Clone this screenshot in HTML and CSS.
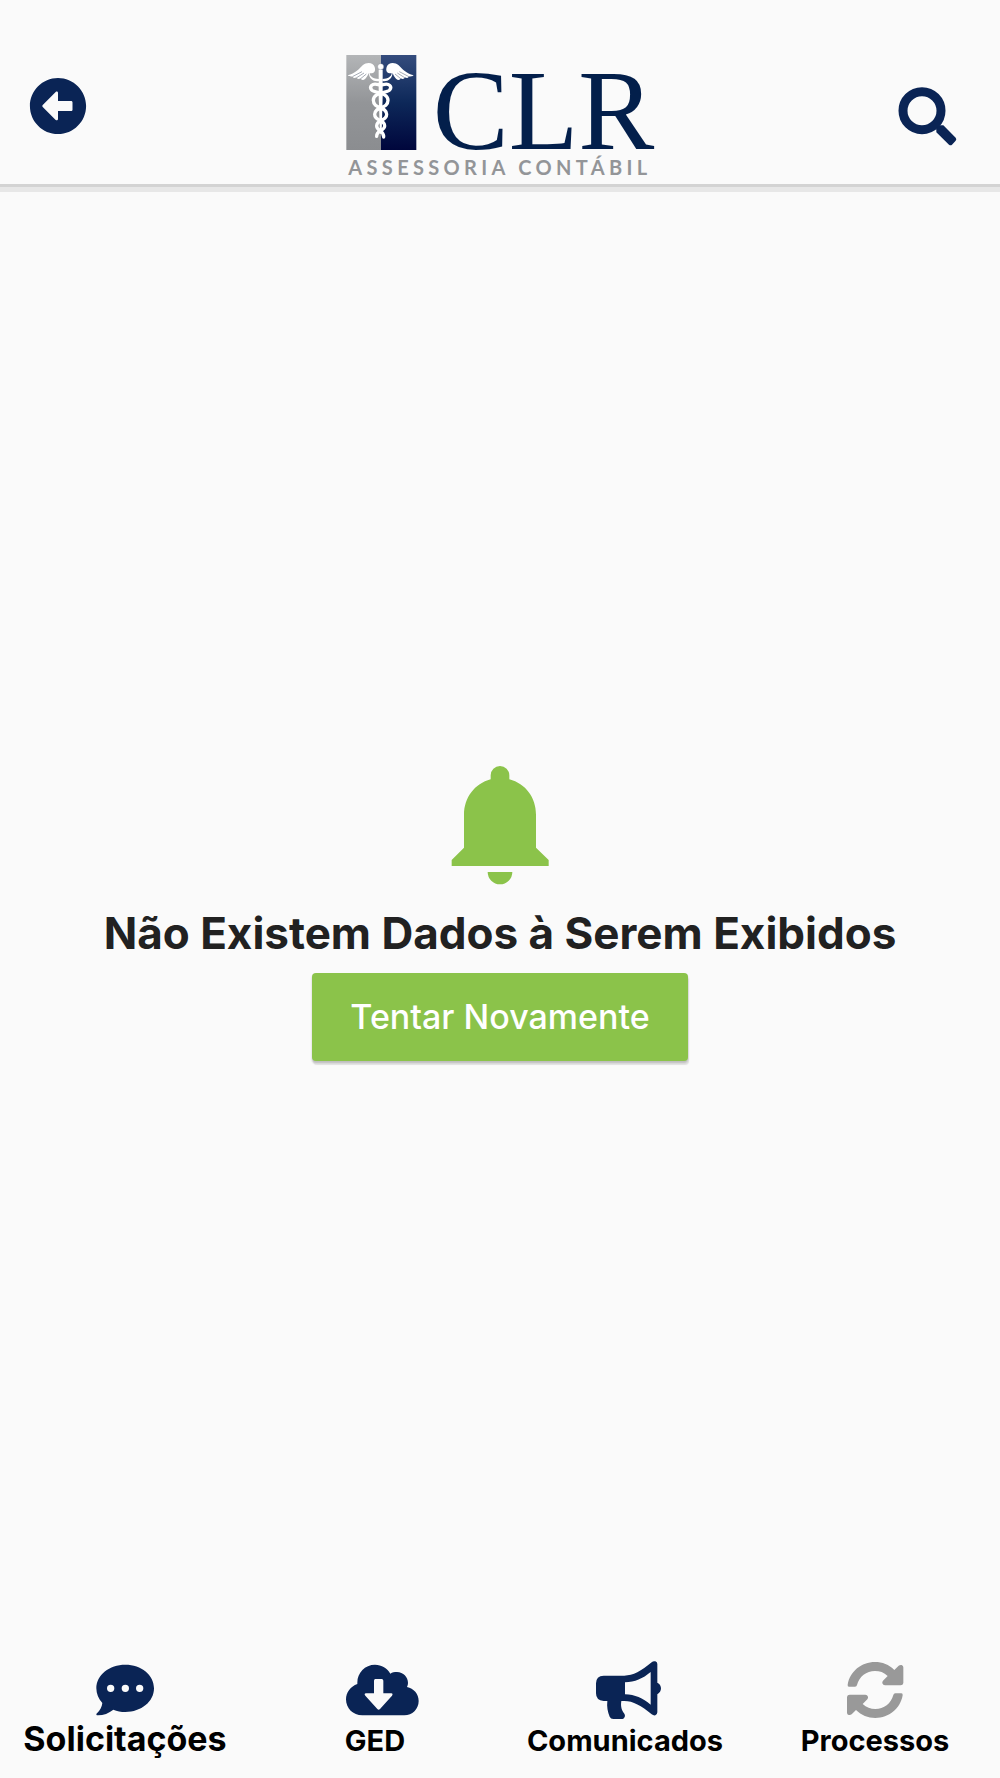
FILE: index.html
```html
<!DOCTYPE html>
<html lang="pt-BR">
<head>
<meta charset="UTF-8" />
<meta name="viewport" content="width=device-width, initial-scale=1" />
<title>CLR Assessoria Contábil</title>
<link rel="stylesheet" href="styles.css">
</head>
<body>

<div id="app">
  <header class="topbar">
    <button type="button" class="icon-btn" aria-label="Voltar">
      <svg class="back-icon" viewBox="0 0 512 512"><path d="M256 504C119 504 8 393 8 256S119 8 256 8s248 111 248 248-111 248-248 248zm116-292H256v-70.9c0-10.7-13-16.1-20.5-8.5L121.2 247.5c-4.7 4.7-4.7 12.2 0 16.9l114.3 114.9c7.6 7.6 20.5 2.2 20.5-8.5V300h116c6.6 0 12-5.4 12-12v-64c0-6.6-5.4-12-12-12z"/></svg>
    </button>

    <svg class="logo" viewBox="45 20 930 408" role="img" aria-label="CLR Assessoria Contábil">
      <defs>
        <linearGradient id="silver" x1="0" y1="0" x2="0" y2="1">
          <stop offset="0" stop-color="#b3b5b7"/>
          <stop offset="0.5" stop-color="#939598"/>
          <stop offset="1" stop-color="#8b8d90"/>
        </linearGradient>
        <linearGradient id="navy" x1="0" y1="0" x2="0" y2="1">
          <stop offset="0" stop-color="#344c7d"/>
          <stop offset="0.5" stop-color="#0d2859"/>
          <stop offset="1" stop-color="#00063c"/>
        </linearGradient>
      </defs>
      <rect x="49" y="47" width="104" height="285" fill="url(#silver)"/>
      <rect x="153" y="47" width="106" height="285" fill="url(#navy)"/>
      <!-- caduceus -->
      <g id="wing" fill="#fff">
        <path d="M147 119C130 119 119 111 119 102C132 103 138 96 134 83C130 70 111 67 98 78C86 91 76 102 53 108C57 112 64 112 69 111C67 116 73 117 80 114C80 119 86 121 92 117C94 123 100 124 106 118C111 113 115 106 116 101C118 119 131 128 147 125Z"/>
        <path d="M69 111L96 97M80 115L102 101M92 118L109 104" fill="none" stroke="#77808f" stroke-width="2"/>
      </g>
      <use href="#wing" transform="matrix(-1 0 0 1 304 0)"/>
      <circle cx="152" cy="82" r="9" fill="#fff" stroke="#7b8492" stroke-width="1"/>
      <path d="M146 91H158V170L155 283H150L146 170Z" fill="#fff"/>
      <g fill="none" stroke="#fff" stroke-linecap="round">
        <path d="M145 136C126 130 117 142 125 152C133 162 174 158 174 183C174 210 134 200 134 225C134 247 164 239 164 260C164 275 139 272 140 291" stroke-width="10"/>
        <path d="M159 136C178 130 187 142 179 152C171 162 130 158 130 183C130 210 170 200 170 225C170 247 140 239 140 260C140 275 162 272 161 293" stroke-width="10"/>
      </g>
      <text class="logo-name" x="308" y="330">CLR</text>
      <text class="logo-tag" x="55" y="408">ASSESSORIA CONTÁBIL</text>
    </svg>

    <button type="button" class="icon-btn" aria-label="Pesquisar">
      <svg class="search-icon" viewBox="144 80 180 180">
        <circle cx="216" cy="151" r="57" fill="none" stroke="#0a2455" stroke-width="27"/>
        <path d="M259 209Q257 206 260 203L270 195H280L317 232Q321 237 317 241L306 253Q302 257 297 253L259 216Z"/>
      </svg>
    </button>
  </header>

  <main class="empty">
    <svg class="bell" viewBox="1110 45 300 360" aria-hidden="true">
      <path d="M1232 88V76A28 28 0 0 1 1288 76V88C1337 101 1368 143 1368 194V293L1406 330V348H1115V330L1152 293V194C1152 143 1184 101 1232 88ZM1223 366H1297A37 37 0 0 1 1223 366Z"/>
    </svg>
    <h1>Não Existem Dados à Serem Exibidos</h1>
    <button type="button" class="retry">Tentar Novamente</button>
  </main>

  <nav class="tabbar">
    <a href="#solicitacoes" class="tab active">
      <svg viewBox="231 60 288 180" aria-hidden="true">
        <path fill-rule="evenodd" d="M376 74C424 74 462 105 462 145S424 216 376 216C363 216 351 213 340 209C326 220 308 227 291 226C289 225 288 222 291 220C300 211 306 200 307 189C296 177 289 162 289 145C289 105 328 74 376 74ZM332 134A11 11 0 1 0 332 156A11 11 0 1 0 332 134ZM376 134A11 11 0 1 0 376 156A11 11 0 1 0 376 134ZM419 134A11 11 0 1 0 419 156A11 11 0 1 0 419 134Z"/>
      </svg>
      <span>Solicitações</span>
    </a>
    <a href="#ged" class="tab">
      <svg viewBox="21 60 288 180" aria-hidden="true">
        <path fill-rule="evenodd" d="M127 226C99 226 78 205 78 178C78 157 92 139 112 132V128C112 98 135 74 165 74C185 74 202 85 211 101C217 97 223 96 231 96C250 96 264 111 264 129C264 133 263 137 261 141C281 145 296 162 296 183C296 207 277 226 253 226ZM166 117Q162 117 162 122V160H138Q131 161 136 167L172 207Q176 211 180 207L216 167Q220 161 214 160H190V122Q190 117 185 117Z"/>
      </svg>
      <span>GED</span>
    </a>
    <a href="#comunicados" class="tab">
      <svg viewBox="201 60 288 180" aria-hidden="true">
        <path fill-rule="evenodd" d="M281 107H343C369 107 394 93 425 67Q430 62 436 64Q442 66 442 72V128C449 131 453 138 453 145S449 159 442 163V217Q442 223 436 226Q430 227 425 223C394 197 369 183 343 183H334C331 201 336 212 343 221Q348 229 340 236Q336 238 330 237H310Q302 237 299 230C293 216 290 201 292 183H281Q258 182 258 160V130Q258 108 281 107ZM345 127V163C375 164 398 174 422 194V96C398 116 375 126 345 127Z"/>
      </svg>
      <span>Comunicados</span>
    </a>
    <a href="#processos" class="tab muted">
      <svg viewBox="141 60 288 180" aria-hidden="true">
        <path id="half" d="M207 140Q202 140 203 134C210 94 244 66 285 66C307 66 327 74 343 90L356 77Q360 74 365 75Q370 77 370 82V129Q369 136 362 136H315Q309 136 307 130Q306 126 309 122L323 108C312 97 299 93 285 93C259 93 238 109 231 135Q230 140 225 140Z"/>
        <use href="#half" transform="rotate(180 285.500 150)"/>
      </svg>
      <span>Processos</span>
    </a>
  </nav>
</div>

</body>
</html>
```
FILE: styles.css
```css
:root {
  --navy: #0a2455;
  --green: #8bc34a;
  --bg: #fafafa;
}

html, body {
  margin: 0;
  padding: 0;
  height: 100%;
  font-family: Inter, "Liberation Sans", sans-serif;
  background: var(--bg);
  color: #212121;
}

#app {
  min-height: 100%;
  display: flex;
  flex-direction: column;
}

svg {
  display: block;
  fill: var(--navy);
}

button {
  border: 0;
  padding: 0;
  background: none;
  font-family: inherit;
  cursor: pointer;
}

.topbar {
  display: grid;
  grid-template-columns: 1fr auto 1fr;
  align-items: end;
  padding: 46px 29px 2px;
  box-shadow: 0 3px 0 #d3d3d3, 0 8px 0 #e7e7e7;
}

.icon-btn:first-child {
  justify-self: start;
  padding-bottom: 47px;
}

.icon-btn:last-child {
  justify-self: end;
  padding: 0 13px 35px 0;
}

.back-icon {
  width: 58px;
  height: 58px;
}

.search-icon {
  width: 60px;
  height: 60px;
}

.logo {
  width: 310px;
  height: 136px;
}

.logo-name {
  font-family: "Liberation Serif", serif;
  font-size: 342px;
  fill: #031f4b;
}

.logo-tag {
  font-family: Lato, sans-serif;
  font-size: 60px;
  font-weight: 700;
  letter-spacing: 13px;
  fill: #939598;
}

.empty {
  flex: 1;
  display: flex;
  flex-direction: column;
  align-items: center;
  justify-content: center;
  padding-bottom: 18px;
}

.bell {
  width: 100px;
  height: 120px;
  fill: var(--green);
}

h1 {
  margin: 20px 0 12px;
  font-size: 44px;
  line-height: 56px;
  font-weight: 700;
  text-align: center;
}

.retry {
  padding: 24px 38px;
  border-radius: 4px;
  background: var(--green);
  box-shadow: 0 2px 2px #bdbdbd, 1px 4px 1px #e3e3e3;
  color: #fff;
  font-size: 34px;
  line-height: 40px;
  font-weight: 500;
}

.tabbar {
  display: grid;
  grid-template-columns: repeat(4, 1fr);
  padding-bottom: 16px;
}

.tab {
  display: flex;
  flex-direction: column;
  align-items: center;
  color: #000;
  font-size: 29px;
  line-height: 42px;
  font-weight: 700;
  text-decoration: none;
}

.tab svg {
  width: 96px;
  height: 60px;
}

.tab.active {
  font-size: 34px;
  line-height: 38px;
}

.tab.muted svg {
  fill: #999;
}
```
